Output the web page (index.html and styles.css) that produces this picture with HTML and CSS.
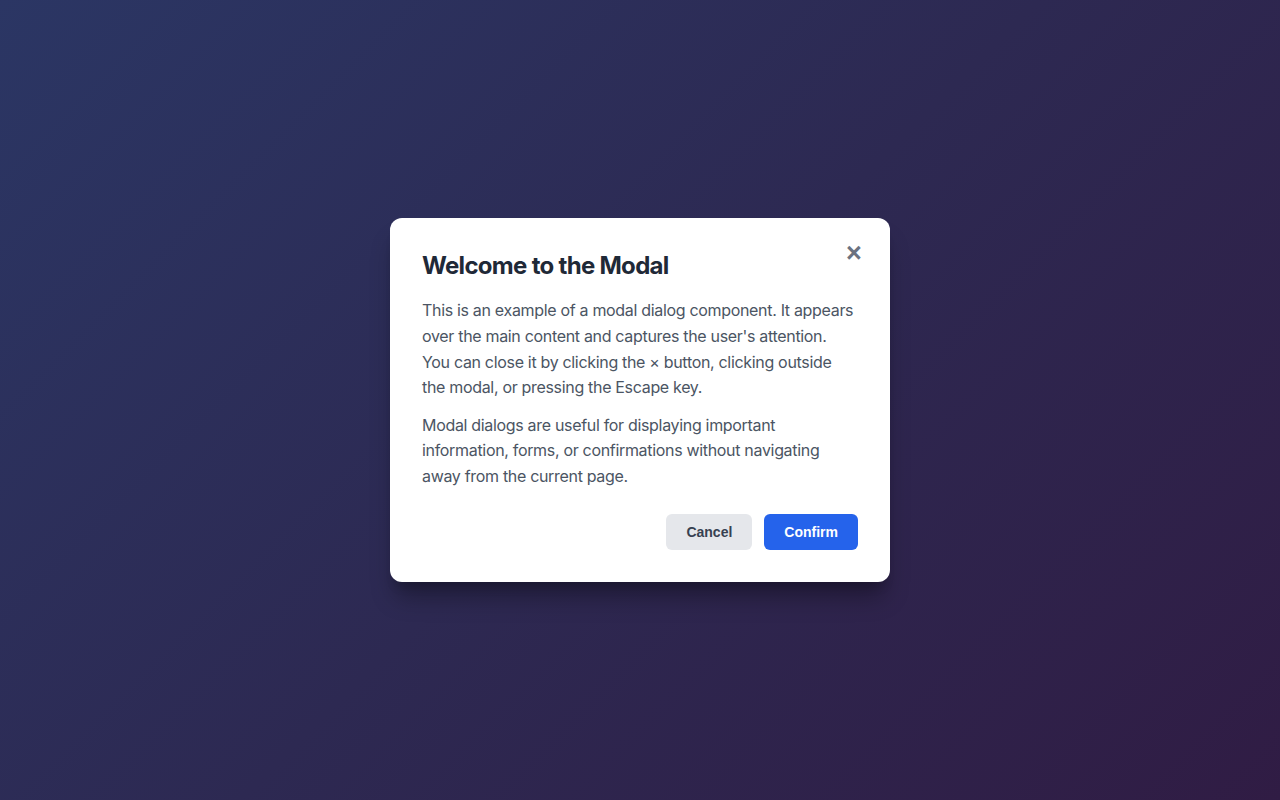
FILE: index.html
```html
<!DOCTYPE html>
<html lang="en">
<head>
<meta charset="utf-8">
<title>Modal</title>
<link rel="stylesheet" href="styles.css">
</head>
<body>
<div class="overlay">
  <div class="modal" role="dialog" aria-labelledby="modal-title">
    <button class="close" aria-label="Close">&times;</button>
    <h2 id="modal-title" class="title">Welcome to the Modal</h2>
    <div class="content">
      <p>This is an example of a modal dialog component. It appears over the main content and captures the user's attention. You can close it by clicking the × button, clicking outside the modal, or pressing the Escape key.</p>
      <p>Modal dialogs are useful for displaying important information, forms, or confirmations without navigating away from the current page.</p>
    </div>
    <div class="actions">
      <button class="btn btn-secondary">Cancel</button>
      <button class="btn btn-primary">Confirm</button>
    </div>
  </div>
</div>
</body>
</html>
```
FILE: styles.css
```css
* { box-sizing: border-box; }
html, body { margin: 0; height: 100%; }
body {
  font-family: Inter, "Noto Sans", sans-serif;
  background: linear-gradient(135deg, #2b3664 0%, #2d2952 50%, #301c44 100%);
}
.overlay {
  height: 100%;
  display: flex;
  align-items: center;
  justify-content: center;
}
.modal {
  position: relative;
  width: 500px;
  background: #ffffff;
  border-radius: 12px;
  padding: 32px;
  box-shadow: 0 20px 25px -5px rgba(0,0,0,0.3), 0 10px 10px -5px rgba(0,0,0,0.15);
}
.close {
  position: absolute;
  top: 16px;
  right: 16px;
  width: 40px;
  height: 40px;
  border: none;
  background: transparent;
  color: #6b7280;
  font-family: "Liberation Sans", Arial, sans-serif;
  font-size: 27px;
  font-weight: 700;
  line-height: 1;
  padding: 0;
  cursor: pointer;
}
.title {
  margin: 2px 0 18px;
  font-size: 24px;
  line-height: 1.2;
  font-weight: 700;
  letter-spacing: -0.7px;
  color: #1f2937;
}
.content {
  max-width: 434px;
}
.content p {
  margin: 0 0 12px;
  font-size: 16px;
  line-height: 1.6;
  letter-spacing: -0.32px;
  color: #4b5563;
}
.content p:last-child { margin-bottom: 0; }
.actions {
  margin-top: 25px;
  display: flex;
  justify-content: flex-end;
  gap: 12px;
}
.btn {
  border: none;
  border-radius: 6px;
  padding: 10px 20px;
  font-family: "Liberation Sans", Arial, sans-serif;
  font-size: 14px;
  font-weight: 700;
  line-height: 16px;
  cursor: pointer;
}
.btn-secondary { background: #e5e7eb; color: #374151; }
.btn-primary { background: #2563eb; color: #ffffff; }
```
